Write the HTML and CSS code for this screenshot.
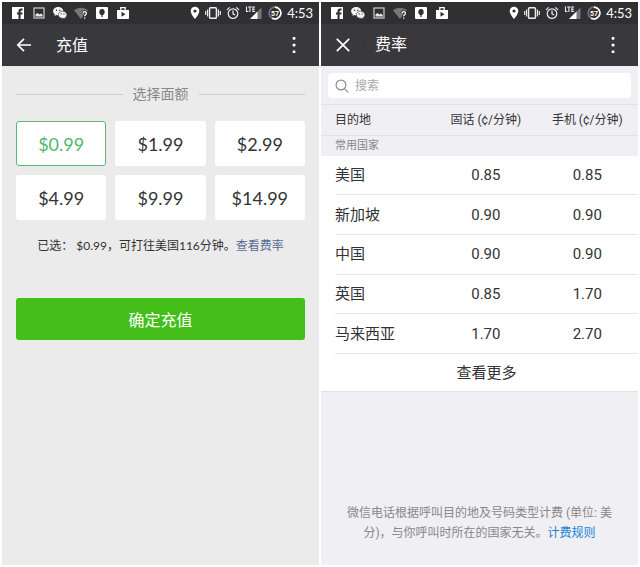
FILE: index.html
```html
<!DOCTYPE html>
<html lang="zh-CN">
<head>
<meta charset="utf-8">
<meta name="viewport" content="width=device-width, initial-scale=1">
<title>充值与费率</title>
<link rel="stylesheet" href="styles.css">
</head>
<body>
<svg class="sprite" aria-hidden="true">
  <symbol id="facebook" viewBox="0 0 14 14"><path fill="#fff" d="M1 1h12v12H9.600V8.600h1.700l.3-2H9.600V5.400c0-.6.3-1 1-1h1V2.600h-1.500c-1.700 0-2.600 1-2.600 2.600v1.400H6v2h1.500V13H1z"/></symbol>
  <symbol id="picture" viewBox="0 0 14 14"><rect x="2" y="2" width="10" height="10" fill="none" stroke="#c4c4c6" stroke-width="1.300"/><path fill="#e8e8e8" d="M3.500 10.500v-2L5.500 7l2 1.400L9 7.600l1.700 1.400v1.500z"/></symbol>
  <symbol id="wechat" viewBox="0 0 14 14"><path fill="#f4f4f4" d="M5.200 1C2.400 1 .1 2.900.1 5.200c0 1.300.7 2.400 1.800 3.200l-.5 1.700 1.900-1c.6.2 1.200.3 1.900.3C8 9.400 10.300 7.500 10.300 5.200S8 1 5.200 1z"/><path fill="#f4f4f4" stroke="#303033" stroke-width=".6" d="M9.600 5.200c-2.400 0-4.300 1.600-4.300 3.600s1.900 3.600 4.300 3.600c.5 0 1-.1 1.500-.2l1.600.8-.4-1.400c1-.7 1.600-1.700 1.600-2.800 0-2-1.900-3.600-4.300-3.600z"/><g fill="#303033"><circle cx="3.500" cy="4.200" r=".7"/><circle cx="6.800" cy="4.200" r=".7"/><circle cx="8.200" cy="7.900" r=".6"/><circle cx="11" cy="7.900" r=".6"/></g></symbol>
  <symbol id="wifi" viewBox="0 0 14 14"><path fill="#77777a" d="M0 4.200C4 .8 10 .8 14 4.200L7 13z"/><path d="M9 7.400c0-2.300 3.400-2.300 3.400-.1 0 1.400-1.700 1.400-1.700 2.900M10.700 11.400v1.400" fill="none" stroke="#303033" stroke-width="3"/><path d="M9 7.400c0-2.300 3.400-2.300 3.400-.1 0 1.400-1.700 1.400-1.700 2.900M10.700 11.400v1.400" fill="none" stroke="#fff" stroke-width="1.300"/></symbol>
  <symbol id="tree" viewBox="0 0 14 14"><rect x="1" y="1" width="12" height="12" rx="1" fill="#fff"/><path fill="#303033" d="M7 3c1.700 0 2.700 1.300 2.700 2.900S8.900 8.700 7.600 8.900V11H6.400V8.900C5.100 8.700 4.300 7.500 4.300 5.900S5.300 3 7 3z"/></symbol>
  <symbol id="play" viewBox="0 0 14 14"><path fill="#fff" d="M1 4h12v8.200c0 .5-.3.800-.8.800H1.800c-.5 0-.8-.3-.8-.8z"/><path d="M4.800 4V1.600h4.400V4" fill="none" stroke="#fff" stroke-width="1.300"/><path fill="#303033" d="M5.500 5.800l4 2.500-4 2.500z"/></symbol>
  <symbol id="pin" viewBox="0 0 10 14"><path fill="#fff" fill-rule="evenodd" d="M5 .8C2.600.8.700 2.700.700 5c0 3.200 4.300 8 4.300 8s4.300-4.800 4.300-8C9.300 2.700 7.400.8 5 .8zm0 2.600a1.600 1.600 0 1 1 0 3.200 1.600 1.600 0 0 1 0-3.200z"/></symbol>
  <symbol id="vibrate" viewBox="0 0 16 14"><rect x="4.600" y="1.700" width="6.800" height="10.600" rx=".8" fill="none" stroke="#eee" stroke-width="1.400"/><path d="M2.600 3.500v7M13.400 3.500v7M.7 5v4M15.300 5v4" stroke="#eee" stroke-width="1.200"/></symbol>
  <symbol id="alarm" viewBox="0 0 14 14"><g fill="none" stroke="#eee" stroke-width="1.200"><circle cx="7" cy="7.600" r="4.800"/><path d="M7 4.600v3.200l2.100 1.300M.9 3.900l2.900-2.500M13.100 3.900l-2.900-2.500"/></g></symbol>
  <symbol id="signal" viewBox="0 0 17 14"><path fill="#77777a" d="M16 1.500V13H4.500z"/><path fill="#fff" d="M12 5.500V13H4.500z"/><path d="M0 0h10v6.500H0z" fill="#303033"/><path d="M1 .5v5h2M2.600 1h3.600M4.400 1v5M9.600 1H7.400v4.500h2.200M7.400 3.200h2" fill="none" stroke="#eee" stroke-width="1.100"/></symbol>
  <symbol id="battery" viewBox="0 0 14 14"><circle cx="7" cy="7" r="5.900" fill="none" stroke="#77777a" stroke-width="1.600"/><path d="M7 1.100a5.900 5.900 0 1 1-3 11" fill="none" stroke="#fff" stroke-width="1.600"/><text x="7" y="9.500" text-anchor="middle" class="battery-text">57</text></symbol>
  <symbol id="more" viewBox="0 0 16 20"><g fill="#fff"><rect x="6.700" y="2" width="2.700" height="2.700" rx=".6"/><rect x="6.700" y="8.700" width="2.700" height="2.700" rx=".6"/><rect x="6.700" y="15.400" width="2.700" height="2.700" rx=".6"/></g></symbol>
</svg>

<main class="screens">
  <section class="screen topup">
    <div class="status">
      <div class="status-left">
        <svg class="ic"><use href="#facebook"/></svg>
        <svg class="ic"><use href="#picture"/></svg>
        <svg class="ic"><use href="#wechat"/></svg>
        <svg class="ic"><use href="#wifi"/></svg>
        <svg class="ic"><use href="#tree"/></svg>
        <svg class="ic"><use href="#play"/></svg>
      </div>
      <div class="status-right">
        <svg class="ic ic-pin"><use href="#pin"/></svg>
        <svg class="ic ic-vibrate"><use href="#vibrate"/></svg>
        <svg class="ic"><use href="#alarm"/></svg>
        <svg class="ic ic-signal"><use href="#signal"/></svg>
        <svg class="ic"><use href="#battery"/></svg>
        <span class="clock">4:53</span>
      </div>
    </div>
    <header class="bar">
      <button class="bar-btn" type="button" aria-label="返回"><svg width="16" height="16" viewBox="0 0 16 16"><path d="M15 8H2M8 1.800L1.800 8 8 14.200" fill="none" stroke="#fff" stroke-width="1.700"/></svg></button>
      <h1>充值</h1>
      <button class="bar-more" type="button" aria-label="更多"><svg width="16" height="20"><use href="#more"/></svg></button>
    </header>
    <div class="topup-body">
      <h2 class="divider">选择面额</h2>
      <div class="amounts">
        <button type="button" class="amount selected">$0.99</button>
        <button type="button" class="amount">$1.99</button>
        <button type="button" class="amount">$2.99</button>
        <button type="button" class="amount">$4.99</button>
        <button type="button" class="amount">$9.99</button>
        <button type="button" class="amount">$14.99</button>
      </div>
      <p class="summary">已选： $0.99，可打往美国116分钟。<a href="#rates">查看费率</a></p>
      <button type="button" class="confirm">确定充值</button>
    </div>
  </section>

  <section class="screen rates" id="rates">
    <div class="status">
      <div class="status-left">
        <svg class="ic"><use href="#facebook"/></svg>
        <svg class="ic"><use href="#wechat"/></svg>
        <svg class="ic"><use href="#picture"/></svg>
        <svg class="ic"><use href="#wifi"/></svg>
        <svg class="ic"><use href="#tree"/></svg>
        <svg class="ic"><use href="#play"/></svg>
      </div>
      <div class="status-right">
        <svg class="ic ic-pin"><use href="#pin"/></svg>
        <svg class="ic ic-vibrate"><use href="#vibrate"/></svg>
        <svg class="ic"><use href="#alarm"/></svg>
        <svg class="ic ic-signal"><use href="#signal"/></svg>
        <svg class="ic"><use href="#battery"/></svg>
        <span class="clock">4:53</span>
      </div>
    </div>
    <header class="bar">
      <button class="bar-btn" type="button" aria-label="关闭"><svg width="16" height="16" viewBox="0 0 16 16"><path d="M1.800 1.800l12.400 12.400M14.200 1.800L1.800 14.200" fill="none" stroke="#fff" stroke-width="1.700"/></svg></button>
      <h1>费率</h1>
      <button class="bar-more" type="button" aria-label="更多"><svg width="16" height="20"><use href="#more"/></svg></button>
    </header>
    <div class="search-wrap">
      <label class="search">
        <svg width="14" height="14" viewBox="0 0 14 14"><circle cx="6" cy="6" r="4.900" fill="none" stroke="#8e8e92" stroke-width="1.200"/><path d="M9.600 9.600l3.700 3.700" stroke="#8e8e92" stroke-width="1.200"/></svg>
        <input type="search" placeholder="搜索" aria-label="搜索">
      </label>
    </div>
    <table class="table">
      <thead>
        <tr><th scope="col">目的地</th><th scope="col">固话 (¢/分钟)</th><th scope="col">手机 (¢/分钟)</th></tr>
      </thead>
      <tbody>
        <tr class="group"><th colspan="3" scope="rowgroup">常用国家</th></tr>
        <tr><td>美国</td><td>0.85</td><td>0.85</td></tr>
        <tr><td>新加坡</td><td>0.90</td><td>0.90</td></tr>
        <tr><td>中国</td><td>0.90</td><td>0.90</td></tr>
        <tr><td>英国</td><td>0.85</td><td>1.70</td></tr>
        <tr><td>马来西亚</td><td>1.70</td><td>2.70</td></tr>
      </tbody>
    </table>
    <button type="button" class="see-more">查看更多</button>
    <p class="note">微信电话根据呼叫目的地及号码类型计费 (单位: 美分)，与你呼叫时所在的国家无关。<a href="#rules">计费规则</a></p>
  </section>
</main>
</body>
</html>
```
FILE: styles.css
```css
* {
  box-sizing: border-box;
}

body {
  margin: 0;
  background: #fff;
  color: #333;
}

button,
input {
  font: inherit;
  color: inherit;
  border: 0;
  padding: 0;
  background: none;
}

h1,
h2,
p {
  margin: 0;
  font-weight: 400;
}

a {
  text-decoration: none;
}

svg {
  display: block;
}

.sprite {
  display: none;
}

.screens {
  display: flex;
  gap: 2px;
  min-height: 100vh;
  padding: 2px;
}

.screen {
  flex: 1;
  min-width: 0;
  display: flex;
  flex-direction: column;
}

.topup {
  background: #ebebeb;
  font-family: Lato, "Noto Sans CJK SC", sans-serif;
}

.rates {
  background: #efeff4;
  font-family: Roboto, "Noto Sans CJK SC", sans-serif;
}

/* status bar */
.status {
  display: flex;
  justify-content: space-between;
  align-items: center;
  height: 22px;
  padding: 0 6px 0 9px;
  background: #303033;
}

.status-left,
.status-right {
  display: flex;
  align-items: center;
}

.status-left {
  gap: 7px;
}

.status-right {
  gap: 5px;
}

.ic {
  width: 14px;
  height: 14px;
}

.ic-pin {
  width: 10px;
}

.ic-vibrate {
  width: 16px;
}

.ic-signal {
  width: 18px;
}

.battery-text {
  font: 700 7px Roboto, sans-serif;
  fill: #fff;
}

.clock {
  font: 13px/22px Lato, sans-serif;
  color: #fff;
}

/* title bar */
.bar {
  display: flex;
  align-items: center;
  height: 42px;
  padding: 0 17px 0 14px;
  background: #39393d;
  color: #fff;
}

.bar-btn {
  width: 30px;
  height: 16px;
  border-right: 1px solid #343438;
}

.bar h1 {
  flex: 1;
  padding-left: 10px;
  font-size: 16px;
  line-height: 24px;
}

/* top-up */
.topup-body {
  display: flex;
  flex-direction: column;
  padding: 17px 14px;
}

.divider {
  display: flex;
  align-items: center;
  gap: 10px;
  font-size: 14px;
  line-height: 22px;
  color: #888;
}

.divider::before,
.divider::after {
  content: "";
  flex: 1;
  height: 1px;
  background: #cdcdcd;
}

.amounts {
  display: grid;
  grid-template-columns: repeat(3, 1fr);
  gap: 9px;
  margin-top: 16px;
}

.amount {
  height: 45px;
  border-radius: 3px;
  background: #fff;
  font-size: 18px;
}

.selected {
  border: 1px solid #59b877;
  color: #4fb86b;
}

.summary {
  margin-top: 16px;
  font-size: 12px;
  line-height: 20px;
  text-align: center;
}

.summary a {
  color: #576b95;
}

.confirm {
  height: 42px;
  margin-top: 42px;
  border-radius: 3px;
  background: #44bf1a;
  color: #fff;
  font-size: 16px;
}

/* rates */
.search-wrap {
  padding: 7px 7px 6px;
}

.search {
  display: flex;
  align-items: center;
  gap: 6px;
  height: 25px;
  padding: 0 7px;
  border-radius: 4px;
  background: #fff;
}

.search input {
  flex: 1;
  min-width: 0;
  font-size: 12px;
  outline: 0;
}

.search input::placeholder {
  color: #aaa;
}

.table {
  width: 100%;
  height: 250px;
  table-layout: fixed;
  border-collapse: collapse;
  background: #fff;
  font-size: 15px;
  line-height: 20px;
}

.table th,
.table td {
  padding: 0;
  font-weight: 400;
  text-align: center;
}

.table td {
  padding-bottom: 1px;
}

.table th {
  background: #efeff4;
}

.table thead th {
  height: 31px;
  border-top: 1px solid #e2e2e6;
  border-bottom: 1px solid #e2e2e6;
  font-size: 12px;
}

.table thead th:first-child {
  width: 36%;
}

.table .group th {
  height: 20px;
  font-size: 11px;
  line-height: 18px;
  color: #888;
}

.table th:first-child,
.table td:first-child {
  padding-left: 14px;
  text-align: left;
}

.table td {
  background: linear-gradient(#e6e6e6, #e6e6e6) 0 100% / 100% 1px no-repeat;
}

.table td:first-child {
  background-position: 14px 100%;
}

.see-more {
  height: 38px;
  padding: 0 0 2px 14px;
  border-bottom: 1px solid #e2e2e6;
  background: #fff;
  font-size: 15px;
}

.note {
  margin-top: auto;
  padding: 0 20px 22px;
  font-size: 12px;
  line-height: 20px;
  text-align: center;
  color: #888;
}

.note a {
  color: #1c82d4;
}
```
